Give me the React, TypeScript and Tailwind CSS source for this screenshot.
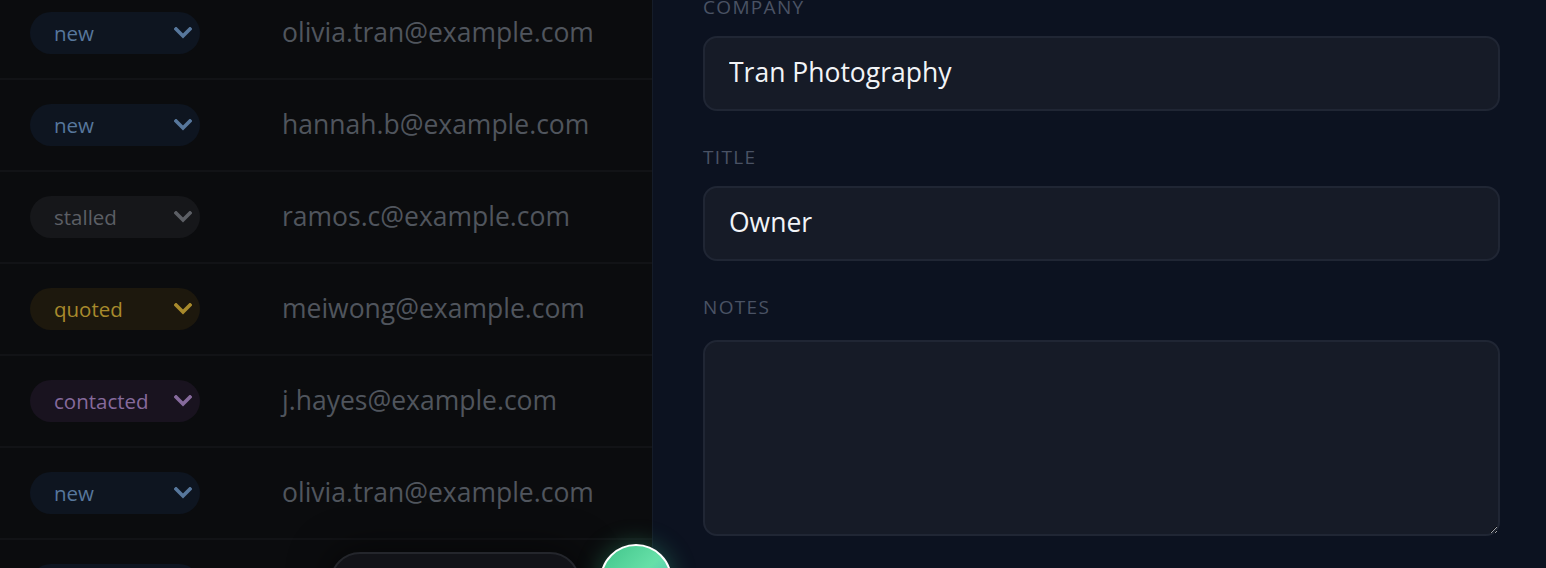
import { ChangeEvent, useState } from 'react'

type Status = 'new' | 'stalled' | 'quoted' | 'contacted'

interface Lead {
  status: Status
  email: string
}

const leads: Lead[] = [
  { status: 'new', email: 'olivia.tran@example.com' },
  { status: 'new', email: 'hannah.b@example.com' },
  { status: 'stalled', email: 'ramos.c@example.com' },
  { status: 'quoted', email: 'meiwong@example.com' },
  { status: 'contacted', email: 'j.hayes@example.com' },
  { status: 'new', email: 'olivia.tran@example.com' },
  { status: 'new', email: 'hannah.b@example.com' },
]

const pillStyles: Record<Status, string> = {
  new: 'bg-[#0e1520] text-[#57779c]',
  stalled: 'bg-[#16171a] text-[#5c5f65]',
  quoted: 'bg-[#1d180d] text-[#a88a2c]',
  contacted: 'bg-[#19131f] text-[#866a9c]',
}

function Chevron() {
  return (
    <svg width="18" height="12" viewBox="0 0 18 12" fill="none" className="shrink-0">
      <polyline points="2,2 9,9 16,2" stroke="currentColor" strokeWidth="3.6" strokeLinecap="square" strokeLinejoin="miter" />
    </svg>
  )
}

function StatusPill({ status }: { status: Status }) {
  return (
    <div className={`w-[170px] h-[42px] rounded-full flex items-center justify-between pl-6 pr-[8px] text-[20.5px] ${pillStyles[status]}`}>
      <span>{status}</span>
      <Chevron />
    </div>
  )
}

function Field({ label, value, onChange }: { label: string; value: string; onChange: (v: string) => void }) {
  return (
    <div className="flex flex-col mb-[33px]">
      <label className="text-[19px] leading-[27px] tracking-[0.07em] uppercase text-[#4a5264]">{label}</label>
      <input
        value={value}
        onChange={(e: ChangeEvent<HTMLInputElement>) => onChange(e.target.value)}
        className="mt-[15px] h-[75px] w-full rounded-[14px] border-2 border-[#202634] bg-[#161b27] px-[24px] pb-[3px] text-[26.5px] text-[#f2f4f7] outline-none"
      />
    </div>
  )
}

export default function App() {
  const [company, setCompany] = useState('Tran Photography')
  const [title, setTitle] = useState('Owner')
  const [notes, setNotes] = useState('')

  return (
    <div className="relative h-[568px] w-[1546px] overflow-hidden flex bg-[#0b0c0e] font-['Open_Sans','Lato',sans-serif]">
      {/* lead list */}
      <div className="w-[653px] shrink-0 border-r border-[#151c29] bg-[#0b0c0e]">
        <div className="-mt-[12px] flex flex-col">
          {leads.map((lead, i) => (
            <div key={i} className="h-[92px] flex items-center border-b-2 border-[#121316] pl-[30px]">
              <StatusPill status={lead.status} />
              <span className="ml-[82px] pb-[1px] text-[26.5px] text-[#50555d]">{lead.email}</span>
            </div>
          ))}
        </div>
      </div>

      {/* detail drawer */}
      <div className="flex-1 bg-[#0c1220] pl-[50px] pr-[46px]">
        <div className="-mt-[6px] flex flex-col">
          <Field label="Company" value={company} onChange={setCompany} />
          <Field label="Title" value={title} onChange={setTitle} />
          <div className="flex flex-col">
            <label className="text-[19px] leading-[27px] tracking-[0.07em] uppercase text-[#4a5264]">Notes</label>
            <textarea
              value={notes}
              onChange={(e) => setNotes(e.target.value)}
              className="mt-[19px] h-[196px] w-full rounded-[14px] border-2 border-[#202634] bg-[#161b27] px-[24px] py-[18px] text-[26.5px] text-[#f2f4f7] outline-none [color-scheme:dark]"
            />
          </div>
        </div>
      </div>

      {/* floating actions */}
      <div className="absolute left-[330px] top-[552px] h-[60px] w-[250px] rounded-full border-2 border-[#24262c] bg-[#121318] shadow-[0_0_40px_rgba(0,0,0,0.6)]" />
      <div className="absolute left-[600px] top-[544px] h-[72px] w-[72px] rounded-full border-2 border-white bg-gradient-to-br from-[#3fc48a] via-[#66e0a8] to-[#4ab0b8] shadow-[0_0_24px_rgba(60,200,140,0.35)]" />
    </div>
  )
}
